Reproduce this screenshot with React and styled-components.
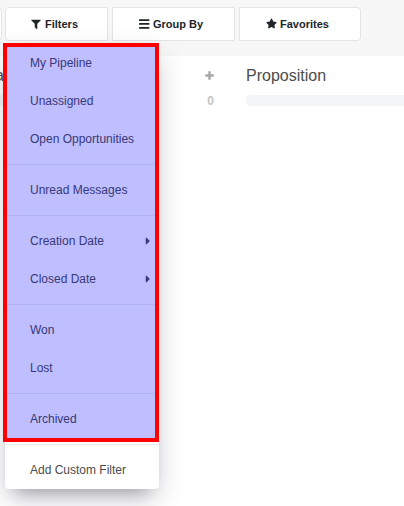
import styled, { createGlobalStyle } from "styled-components"
import { FaCaretRight, FaStar } from "react-icons/fa";

const GlobalStyle = createGlobalStyle`
*{
    box-sizing: border-box;
}
body{
    margin: 0;
    min-height: 100vh;
    background-color: #fff;
    color: #4c4c4c;
    font-family: "Liberation Sans", Arial, sans-serif;
    font-size: 12px;
}
button{
    font-family: inherit;
    cursor: pointer;
}
`
const Toolbar = styled.header`
display: flex;
column-gap: 4px;
height: 56px;
padding: 7px 0;
margin-left: -9px;
background-color: #f7f7f7;
`
const SearchEnd = styled.div`
width: 11px;
height: 34px;
margin-right: -1px;
border: 1px solid #e4e4e5;
border-radius: 4px;
background-color: #fff;
`
const Dropdown = styled.div`
position: relative;
`
const ToolButton = styled.button`
display: flex;
align-items: center;
justify-content: center;
column-gap: 3px;
width: ${({ $width }) => $width}px;
height: 34px;
padding: 0 5px 1px 0;
border: 1px solid #e4e4e5;
border-radius: ${({ $radius }) => $radius || "0"};
background-color: #fff;
color: #212529;
font-size: 11px;
font-weight: bold;
`
const Menu = styled.div`
position: absolute;
top: 37px;
left: 0;
z-index: 1;
width: 154px;
border-radius: 0 0 4px 4px;
background-color: #fff;
box-shadow: 0 12px 18px -10px rgba(20, 20, 45, 0.4), 0 10px 30px rgba(20, 20, 45, 0.14);
`
const MenuItem = styled.button`
display: flex;
align-items: center;
justify-content: space-between;
width: 100%;
height: 38px;
padding: 0 5px 0 25px;
border: none;
background: none;
color: #4c4c4c;
font-size: 12px;
text-align: left;
white-space: nowrap;
`
const Divider = styled.hr`
height: 1px;
margin: 6px 0;
border: none;
background-color: #e9ecef;
`
const Highlight = styled.div`
position: absolute;
inset: -1px 0 47px -2px;
border: 4px solid #f00;
background-color: rgba(0, 0, 255, 0.25);
background-clip: padding-box;
pointer-events: none;
`
const Board = styled.main`
display: grid;
grid-template-columns: 219px 1fr;
column-gap: 32px;
margin-left: -5px;
`
const Column = styled.section`
padding-top: 10px;
`
const ColumnHeader = styled.div`
display: flex;
align-items: center;
justify-content: space-between;
height: 20px;
h2{
    margin: 0;
    font-size: 16px;
    font-weight: normal;
}
`
const AddButton = styled.button`
display: flex;
padding: 0 0 2px;
border: none;
background: none;
color: #a6a6a6;
`
const Progress = styled.div`
display: flex;
align-items: flex-start;
justify-content: space-between;
column-gap: 56px;
margin-top: 9px;
color: #c4c4c4;
font-weight: bold;
line-height: 12px;
`
const Bar = styled.div`
flex: 1;
height: 11px;
border-radius: 4px 0 0 4px;
background-color: #f4f5f7;
`

const FilterIcon = () => (
  <svg width="12" height="12" viewBox="0 0 1792 1792" fill="currentColor">
    <path d="M1595 295q17 41-14 70l-493 493v742q0 42-39 59-13 5-25 5-27 0-45-19l-256-256q-19-19-19-45v-486l-493-493q-31-29-14-70 17-39 59-39h1280q42 0 59 39z"/>
  </svg>
)
const BarsIcon = () => (
  <svg width="11" height="10" viewBox="0 0 11 10" fill="currentColor">
    <rect y="0.2" width="10.4" height="1.7" rx="0.4"/>
    <rect y="4.1" width="10.4" height="1.7" rx="0.4"/>
    <rect y="8" width="10.4" height="1.7" rx="0.4"/>
  </svg>
)
const PlusIcon = () => (
  <svg width="9" height="9" viewBox="0 0 9 9" fill="currentColor">
    <path d="M3.3 0.3h2.4v3h3v2.4h-3v3h-2.4v-3h-3v-2.4h3z"/>
  </svg>
)

const groups = [
  ["My Pipeline", "Unassigned", "Open Opportunities"],
  ["Unread Messages"],
  ["Creation Date", "Closed Date"],
  ["Won", "Lost"],
  ["Archived"],
  ["Add Custom Filter"],
];
const submenus = ["Creation Date", "Closed Date"];

const FilterMenu = () => (
  <Menu>
    {groups.map((items, index) => (
      <div key={items[0]}>
        {index > 0 && <Divider/>}
        {items.map(item => (
          <MenuItem key={item} type="button">
            {item}
            {submenus.includes(item) && <FaCaretRight size={12}/>}
          </MenuItem>
        ))}
      </div>
    ))}
    <Highlight/>
  </Menu>
)

const App = () => {
  return (
    <>
      <GlobalStyle/>
      <Toolbar>
        <SearchEnd/>
        <Dropdown>
          <ToolButton type="button" $width={103} $radius="4px 0 0 4px"><FilterIcon/>Filters</ToolButton>
          <FilterMenu/>
        </Dropdown>
        <ToolButton type="button" $width={123}><BarsIcon/>Group By</ToolButton>
        <ToolButton type="button" $width={122} $radius="0 4px 4px 0"><FaStar size={11}/>Favorites</ToolButton>
      </Toolbar>
      <Board>
        <Column>
          <ColumnHeader>
            <h2>a</h2>
            <AddButton type="button" aria-label="Add"><PlusIcon/></AddButton>
          </ColumnHeader>
          <Progress><Bar/>0</Progress>
        </Column>
        <Column>
          <ColumnHeader>
            <h2>Proposition</h2>
          </ColumnHeader>
          <Progress><Bar/></Progress>
        </Column>
      </Board>
    </>
  )
}
export default App
